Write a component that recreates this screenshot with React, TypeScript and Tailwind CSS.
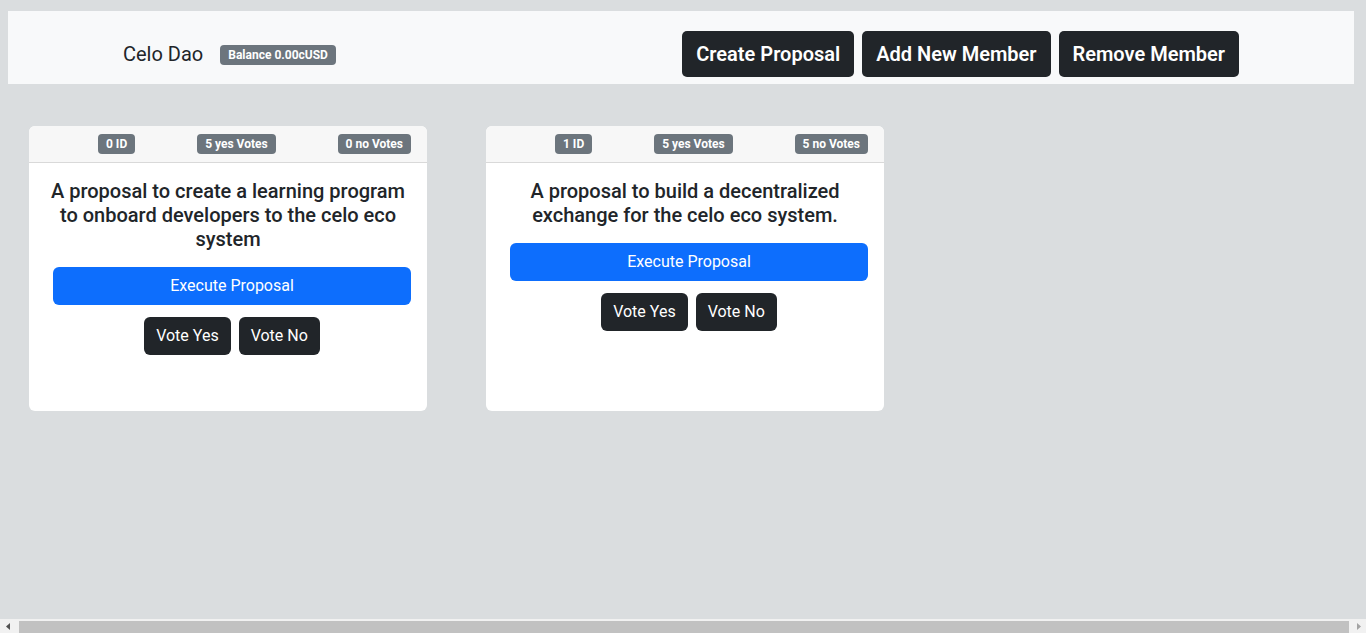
import React from "react";

const proposals = [
  {
    id: 0,
    yes: 5,
    no: 0,
    text: "A proposal to create a learning program to onboard developers to the celo eco system",
  },
  {
    id: 1,
    yes: 5,
    no: 5,
    text: "A proposal to build a decentralized exchange for the celo eco system.",
  },
];

function Badge({ children }: { children: React.ReactNode }) {
  return (
    <span className="inline-flex h-5 items-center rounded-[4px] bg-[#6c757d] px-[8px] text-[12px] font-bold leading-none text-white">
      {children}
    </span>
  );
}

function ProposalCard({ id, yes, no, text }: (typeof proposals)[number]) {
  return (
    <div className="flex h-[285px] w-[398px] flex-col rounded-[6px] bg-white">
      <div className="flex h-[37px] items-center justify-between rounded-t-[6px] border-b border-[#d9d9d9] bg-[#f7f7f7] pl-[69px] pr-4">
        <Badge>{id} ID</Badge>
        <Badge>{yes} yes Votes</Badge>
        <Badge>{no} no Votes</Badge>
      </div>
      <div className="flex flex-col p-4">
        <h5 className="text-center text-[20px] font-medium leading-[24px] text-[#212529]">{text}</h5>
        <div className="ml-2 mt-4">
          <button className="h-[38px] w-full rounded-[6px] bg-[#0d6efd] text-[16px] text-white">
            Execute Proposal
          </button>
          <div className="mt-3 flex justify-center gap-2">
            <button className="h-[38px] rounded-[6px] bg-[#212529] px-3 text-[16px] text-white">Vote Yes</button>
            <button className="h-[38px] rounded-[6px] bg-[#212529] px-3 text-[16px] text-white">Vote No</button>
          </div>
        </div>
      </div>
    </div>
  );
}

// horizontal scrollbar as seen in the screenshot (page is a hair wider than the window)
function ScrollBar() {
  return (
    <div className="flex h-[14px] shrink-0 items-end bg-[#f1f1f1]">
      <div className="flex h-full w-[19px] items-center justify-center pr-[3px]">
        <svg width="4" height="7" viewBox="0 0 4 7">
          <path d="M4 0 L0 3.5 L4 7 Z" fill="#505050" />
        </svg>
      </div>
      <div className="h-[12px] flex-1 bg-[#c1c1c1]" />
      <div className="flex h-full w-[17px] items-center justify-center pl-[2px]">
        <svg width="4" height="7" viewBox="0 0 4 7">
          <path d="M0 0 L4 3.5 L0 7 Z" fill="#a3a3a3" />
        </svg>
      </div>
    </div>
  );
}

export default function App() {
  return (
    <div
      className="flex h-[633px] w-[1366px] flex-col overflow-hidden bg-[#dadddf]"
      style={{ fontFamily: "Roboto, 'Noto Sans', sans-serif" }}
    >
      <div className="flex-1 pt-[11px]">
        <nav className="ml-2 flex h-[73px] w-[1346px] items-start justify-between bg-[#f8f9fa] px-[115px] pt-5">
          <div className="flex h-[46px] items-center">
            <span className="text-[20px] text-[#212529]">Celo Dao</span>
            <span className="ml-[17px]">
              <Badge>Balance 0.00cUSD</Badge>
            </span>
          </div>
          <div className="flex gap-2">
            {["Create Proposal", "Add New Member", "Remove Member"].map((t) => (
              <button
                key={t}
                className="h-[46px] rounded-[5px] bg-[#212529] px-[14px] text-[20px] font-semibold text-white"
              >
                {t}
              </button>
            ))}
          </div>
        </nav>
        <div className="mt-[42px] flex gap-[59px] pl-[29px]">
          {proposals.map((p) => (
            <ProposalCard key={p.id} {...p} />
          ))}
        </div>
      </div>
      <ScrollBar />
    </div>
  );
}
